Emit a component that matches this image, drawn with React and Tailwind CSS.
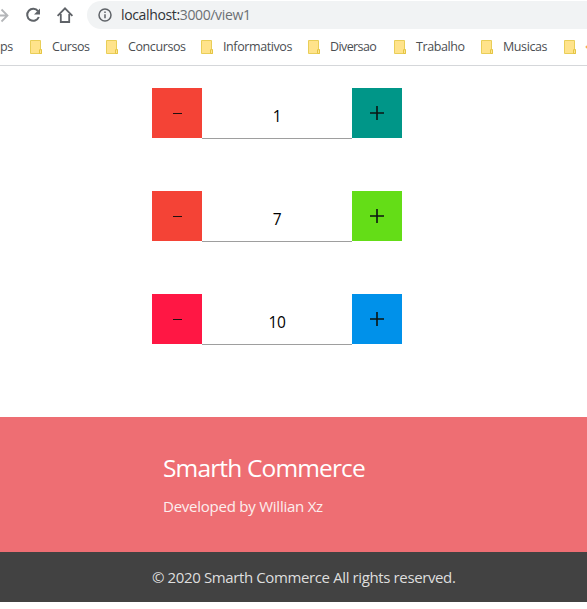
const bookmarks = [
  { label: 'Cursos', width: 'w-[76px]', tracking: 'tracking-[-0.4px]' },
  { label: 'Concursos', width: 'w-[95px]', tracking: 'tracking-[-0.4px]' },
  { label: 'Informativos', width: 'w-[107px]', tracking: 'tracking-[-0.4px]' },
  { label: 'Diversao', width: 'w-[86px]', tracking: 'tracking-[-0.6px]' },
  { label: 'Trabalho', width: 'w-[87px]', tracking: 'tracking-[-0.4px]' },
  { label: 'Musicas', width: 'w-[83px]', tracking: 'tracking-[-0.4px]' },
];

const counters = [
  { value: 1, minus: 'bg-[#f44336]', plus: 'bg-[#009688]' },
  { value: 7, minus: 'bg-[#f44336]', plus: 'bg-[#64dd17]' },
  { value: 10, minus: 'bg-[#ff1744]', plus: 'bg-[#0091ea]' },
];

function FolderIcon() {
  return (
    <svg className="h-[14px] w-[12px] shrink-0" viewBox="0 0 12 14">
      <path d="M.5.5h10v9.2h1v3.8H.5z" fill="#ffe38b" stroke="#e9ce58" />
      <path d="M9.5 13.5v-3.8h2v3.8z" fill="#ffe793" stroke="#e5c544" />
    </svg>
  );
}

function Toolbar() {
  return (
    <div className="flex h-[29px] items-center">
      <svg className="h-[30px] w-[87px] shrink-0" viewBox="0 0 87 30" fill="none">
        <path d="M-6 15.5H7M1.5 9.5l6 6-6 6" stroke="#b4b6b9" strokeWidth="1.8" />
        <path d="M38 11.2A6 6 0 1 0 38.8 17" stroke="#5f6368" strokeWidth="2" />
        <path d="M40 8.5v6h-6z" fill="#5f6368" />
        <path d="M57.6 15.9 65 8.3l7.4 7.6M60.8 14v8h8.4v-8" stroke="#5f6368" strokeWidth="1.8" />
      </svg>
      <div className="mt-px flex h-[28px] grow items-center rounded-l-full bg-[#f1f3f4] pl-[11px]">
        <svg className="size-[14px]" viewBox="0 0 14 14" fill="none" stroke="#5f6368" strokeWidth="1.5">
          <circle cx="7" cy="7" r="6" />
          <path d="M7 6.2v4M7 3.5V5" />
        </svg>
        <span className="ml-[9px] text-[14px] leading-[20px] tracking-[-0.36px] text-[#6b6f73]">
          <span className="text-[#303337]">localhost:</span>3000/view1
        </span>
      </div>
    </div>
  );
}

function BookmarksBar() {
  return (
    <div className="flex h-[37px] items-center overflow-hidden border-b border-[#d5d7da] text-[12.5px] text-[#4b4e52]">
      <span className="w-[30px] shrink-0 tracking-[-0.4px]">ps</span>
      {bookmarks.map((item) => (
        <div key={item.label} className={`flex shrink-0 items-center gap-[10px] ${item.width}`}>
          <FolderIcon />
          <span className={item.tracking}>{item.label}</span>
        </div>
      ))}
      <FolderIcon />
      <span className="ml-[10px] size-[4px] shrink-0 rotate-45 bg-[#f9b24a]" />
    </div>
  );
}

function Counter({ value, minus, plus }) {
  return (
    <div className="flex h-[51px] w-[250px] items-start">
      <button className={`flex size-[50px] items-center justify-center ${minus}`}>
        <svg className="size-[16px]" viewBox="0 0 16 16">
          <path d="M4 8.5h9" stroke="#211010" />
        </svg>
      </button>
      <div className="flex h-[51px] w-[150px] items-center justify-center border-b border-[#9e9e9e] pt-[7px] text-[15.5px] tracking-[-0.3px] text-black">
        {value}
      </div>
      <button className={`flex size-[50px] items-center justify-center ${plus}`}>
        <svg className="size-[16px]" viewBox="0 0 16 16">
          <path d="M1 8h14M8 1v14" stroke="#0b1512" strokeWidth="1.6" />
        </svg>
      </button>
    </div>
  );
}

export default function App() {
  return (
    <div className="h-[609px] w-[587px] overflow-hidden bg-white font-['Open_Sans','Noto_Sans',sans-serif]">
      <Toolbar />
      <BookmarksBar />
      <main className="flex h-[351px] flex-col gap-[52px] pl-[152px] pt-[22px]">
        {counters.map((item) => (
          <Counter key={item.value} {...item} />
        ))}
      </main>
      <footer>
        <div className="h-[135px] bg-[#ee6e73] pl-[163px] pt-[34px] text-white">
          <h5 className="whitespace-nowrap text-[24.5px] leading-[34px] tracking-[-0.85px]">Smarth Commerce</h5>
          <p className="mt-[10px] whitespace-nowrap text-[15px] leading-[22px] tracking-[-0.24px] text-[#fceeee]">Developed by Willian Xz</p>
        </div>
        <div className="flex h-[50px] items-center bg-[#424242] pl-[152px] text-[15px] tracking-[-0.38px] text-[#dedede]">
          <span className="whitespace-nowrap">© 2020 Smarth Commerce All rights reserved.</span>
        </div>
      </footer>
    </div>
  );
}
